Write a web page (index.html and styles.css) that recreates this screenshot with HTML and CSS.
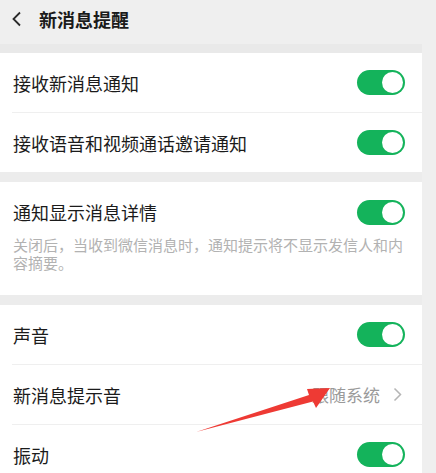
FILE: index.html
```html
<!DOCTYPE html>
<html lang="zh">
<head>
<meta charset="utf-8">
<link rel="stylesheet" href="styles.css">
</head>
<body>
<div class="screen">
  <div class="main">
    <header class="topbar">
      <svg class="back" width="12" height="16" viewBox="0 0 12 16"><path d="M9 1.5 L2.5 8 L9 14.5" fill="none" stroke="#2a2a2a" stroke-width="1.8" stroke-linejoin="miter"/></svg>
      <span class="title">新消息提醒</span>
    </header>
    <div class="gap first"></div>
    <section class="group">
      <div class="row"><span class="label">接收新消息通知</span><span class="switch"></span></div>
      <div class="divider"></div>
      <div class="row"><span class="label">接收语音和视频通话邀请通知</span><span class="switch"></span></div>
    </section>
    <div class="gap"></div>
    <section class="group detail">
      <div class="row"><span class="label">通知显示消息详情</span><span class="switch"></span></div>
      <p class="desc">关闭后，当收到微信消息时，通知提示将不显示发信人和内容摘要。</p>
    </section>
    <div class="gap"></div>
    <section class="group">
      <div class="row"><span class="label">声音</span><span class="switch"></span></div>
      <div class="divider"></div>
      <div class="row"><span class="label">新消息提示音</span><span class="value">跟随系统<svg class="chev" width="9" height="15" viewBox="0 0 9 15"><path d="M1.5 1.5 L7.5 7.5 L1.5 13.5" fill="none" stroke="#b5b5b5" stroke-width="1.5"/></svg></span></div>
      <div class="divider"></div>
      <div class="row"><span class="label">振动</span><span class="switch"></span></div>
    </section>
  </div>
  <div class="strip"></div>
  <svg class="arrow" width="436" height="473" viewBox="0 0 436 473"><path d="M196 432 L309 395 L307 389 L330 388 L316 408 L313 401.5 Z" fill="#ee3a34"/></svg>
</div>
</body>
</html>
```
FILE: styles.css
```css
html, body {
  margin: 0;
  padding: 0;
  background: #ededed;
}
body {
  font-family: "Noto Sans CJK SC", "Noto Sans", sans-serif;
  color: #1b1b1b;
}
.screen {
  position: relative;
  display: flex;
  width: 436px;
  height: 473px;
  overflow: hidden;
}
.main {
  width: 422px;
  flex: none;
  display: flex;
  flex-direction: column;
  background: #ececec;
}
.strip {
  flex: 1;
  background: #efefef;
}
.topbar {
  flex: none;
  height: 44px;
  display: flex;
  align-items: center;
  background: #efefef;
  padding-left: 11px;
  box-sizing: border-box;
}
.back {
  margin-right: 16px;
  margin-top: -6px;
}
.title {
  font-size: 18px;
  font-weight: 700;
  margin-top: -7px;
}
.gap {
  height: 10px;
  flex: none;
}
.gap.first {
  height: 9px;
  background: #e9e9e9;
}
.group {
  background: #fff;
  flex: none;
}
.row {
  height: 59px;
  display: flex;
  align-items: center;
  justify-content: space-between;
  padding: 0 17px 0 13px;
}
.label {
  font-size: 18px;
  line-height: 24px;
}
.divider {
  height: 1px;
  margin-left: 12px;
  background: #efefef;
}
.switch {
  position: relative;
  width: 48px;
  height: 25px;
  border-radius: 13px;
  background: #14b35b;
  flex: none;
}
.switch::after {
  content: "";
  position: absolute;
  right: 2px;
  top: 2px;
  width: 21px;
  height: 21px;
  border-radius: 50%;
  background: #fff;
}
.detail .row {
  height: 60px;
}
.desc {
  margin: -6px 0 0;
  padding: 0 12px 23px 13px;
  font-size: 15px;
  line-height: 18px;
  color: #b2b2b2;
}
.value {
  display: flex;
  align-items: center;
  font-size: 17px;
  color: #9a9a9a;
  margin-right: 3px;
}
.chev {
  margin-left: 13px;
}
.arrow {
  position: absolute;
  left: 0;
  top: 0;
  pointer-events: none;
}
```
